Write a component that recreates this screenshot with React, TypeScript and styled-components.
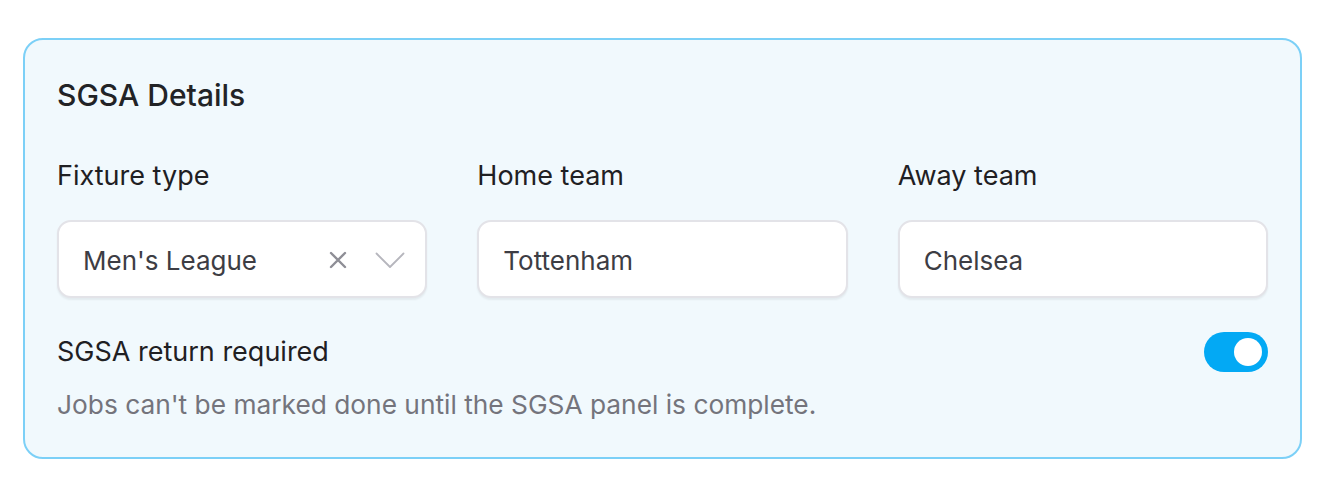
import React from "react";
import styled, { createGlobalStyle } from "styled-components";

const Global = createGlobalStyle`
  html, body { margin: 0; padding: 0; background: #ffffff; }
  body { font-family: Inter, "Noto Sans", sans-serif; -webkit-font-smoothing: antialiased; }
  * { box-sizing: border-box; }
`;

const Page = styled.div`
  padding: 38px 30px 0 23px;
`;

const Card = styled.section`
  border: 2px solid #7cd0f7;
  border-radius: 20px;
  background: #f1f9fd;
  padding: 35px 32px 36px 32px;
  display: flex;
  flex-direction: column;
`;

const Title = styled.h2`
  margin: 0;
  font-size: 30px;
  line-height: 40px;
  font-weight: 500;
  color: #222326;
`;

const Grid = styled.div`
  display: grid;
  grid-template-columns: repeat(3, 1fr);
  column-gap: 50px;
  margin-top: 45px;
`;

const Field = styled.div`
  display: flex;
  flex-direction: column;
  gap: 28px;
`;

const Label = styled.div`
  font-size: 27px;
  line-height: 32px;
  font-weight: 400;
  color: #1f2023;
`;

const Box = styled.div`
  height: 78px;
  background: #ffffff;
  border: 2px solid #e3e3e8;
  border-radius: 14px;
  box-shadow: 0 2px 2px rgba(0, 0, 0, 0.06);
  display: flex;
  align-items: center;
  padding: 2px 20px 0 24px;
  font-size: 26px;
  color: #3d3d44;
`;

const Value = styled.span`
  flex: 1;
`;

const Icons = styled.span`
  display: flex;
  align-items: center;
  gap: 28px;
  color: #8e8e96;
`;

const ToggleRow = styled.div`
  display: flex;
  align-items: center;
  justify-content: space-between;
  margin-top: 34px;
`;

const Toggle = styled.div<{ $on: boolean }>`
  width: 64px;
  height: 40px;
  border-radius: 20px;
  background: ${(p) => (p.$on ? "#03a9f4" : "#d4d4d8")};
  display: flex;
  align-items: center;
  justify-content: ${(p) => (p.$on ? "flex-end" : "flex-start")};
  padding: 0 6px;
`;

const Knob = styled.div`
  width: 28px;
  height: 28px;
  border-radius: 50%;
  background: #ffffff;
`;

const Help = styled.p`
  margin: 17px 0 0;
  font-size: 26.3px;
  line-height: 32px;
  color: #74747c;
`;

const XIcon = () => (
  <svg width="18" height="18" viewBox="0 0 18 18" fill="none">
    <path d="M2 2L16 16M16 2L2 16" stroke="currentColor" strokeWidth="2.4" strokeLinecap="round" />
  </svg>
);

const Chevron = () => (
  <svg width="30" height="17" viewBox="0 0 30 17" fill="none">
    <path d="M1.5 1.5L15 15L28.5 1.5" stroke="#b6b6bd" strokeWidth="1.8" strokeLinecap="round" strokeLinejoin="round" />
  </svg>
);

export default function App() {
  return (
    <>
      <Global />
      <Page>
        <Card>
          <Title>SGSA Details</Title>
          <Grid>
            <Field>
              <Label>Fixture type</Label>
              <Box>
                <Value>Men's League</Value>
                <Icons>
                  <XIcon />
                  <Chevron />
                </Icons>
              </Box>
            </Field>
            <Field>
              <Label>Home team</Label>
              <Box>
                <Value>Tottenham</Value>
              </Box>
            </Field>
            <Field>
              <Label>Away team</Label>
              <Box>
                <Value>Chelsea</Value>
              </Box>
            </Field>
          </Grid>
          <ToggleRow>
            <Label>SGSA return required</Label>
            <Toggle $on>
              <Knob />
            </Toggle>
          </ToggleRow>
          <Help>Jobs can't be marked done until the SGSA panel is complete.</Help>
        </Card>
      </Page>
    </>
  );
}
